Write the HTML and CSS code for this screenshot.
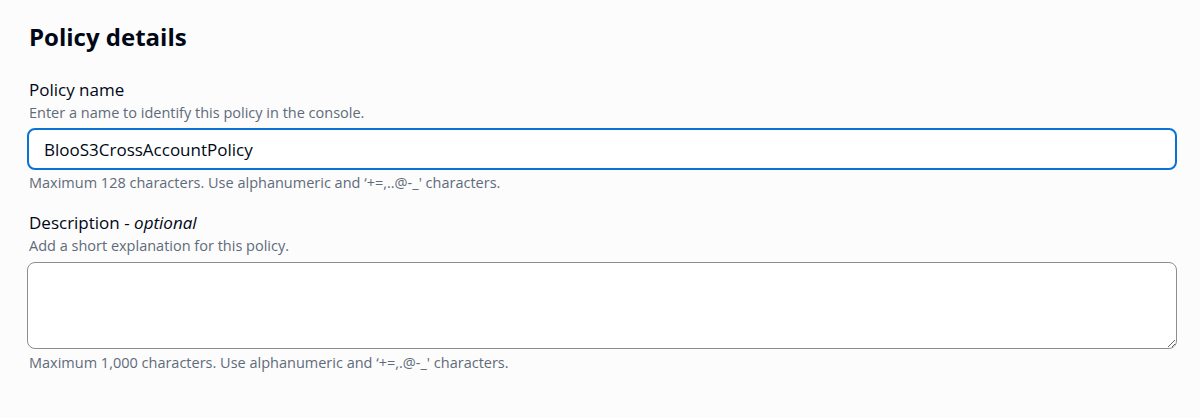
FILE: index.html
```html
<!DOCTYPE html>
<html lang="en">
<head>
<meta charset="utf-8">
<title>Policy details</title>
<link rel="stylesheet" href="styles.css">
</head>
<body>
<main class="container">
  <h2 class="title">Policy details</h2>
  <div class="field field-first">
    <label class="label" for="policy-name">Policy name</label>
    <div class="desc">Enter a name to identify this policy in the console.</div>
    <input class="input" id="policy-name" type="text" value="BlooS3CrossAccountPolicy">
    <div class="constraint">Maximum 128 characters. Use alphanumeric and ‘+=,..@-_' characters.</div>
  </div>
  <div class="field">
    <label class="label" for="policy-desc">Description - <i>optional</i></label>
    <div class="desc">Add a short explanation for this policy.</div>
    <textarea class="textarea" id="policy-desc"></textarea>
    <div class="constraint constraint-last">Maximum 1,000 characters. Use alphanumeric and ‘+=,.@-_' characters.</div>
  </div>
</main>
</body>
</html>
```

FILE: styles.css
```css
* { box-sizing: border-box; }
html, body {
  margin: 0;
  background: #fcfcfc;
}
body {
  font-family: "Open Sans", "Noto Sans", sans-serif;
  color: #000716;
}
.container {
  padding: 22px 23px 0 27px;
}
.title {
  margin: 0 0 0 2px;
  font-size: 24px;
  line-height: 30px;
  font-weight: 700;
  color: #000716;
}
.field {
  display: flex;
  flex-direction: column;
  margin-top: 18px;
}
.field-first {
  margin-top: 26px;
}
.label {
  margin-left: 2px;
  font-size: 17px;
  line-height: 24px;
  color: #000716;
}
.label i {
  font-style: italic;
}
.desc {
  margin-left: 2px;
  font-size: 14.5px;
  line-height: 22px;
  color: #5f6b7a;
}
.input {
  margin-top: 4px;
  height: 42px;
  width: 100%;
  padding: 0 15px;
  border: 2px solid #0972d3;
  border-radius: 8px;
  background: #ffffff;
  font-family: "Open Sans", "Noto Sans", sans-serif;
  font-size: 17px;
  color: #000716;
  outline: none;
}
.textarea {
  margin-top: 5px;
  height: 87px;
  width: 100%;
  border: 1px solid #8c8c94;
  border-radius: 8px;
  background: #ffffff;
  font-family: "Open Sans", "Noto Sans", sans-serif;
  font-size: 17px;
  resize: vertical;
  outline: none;
}
.constraint {
  margin-top: 3px;
  margin-left: 2px;
  font-size: 14.5px;
  line-height: 20px;
  color: #5f6b7a;
}
.constraint-last {
  margin-top: 4px;
}
```
